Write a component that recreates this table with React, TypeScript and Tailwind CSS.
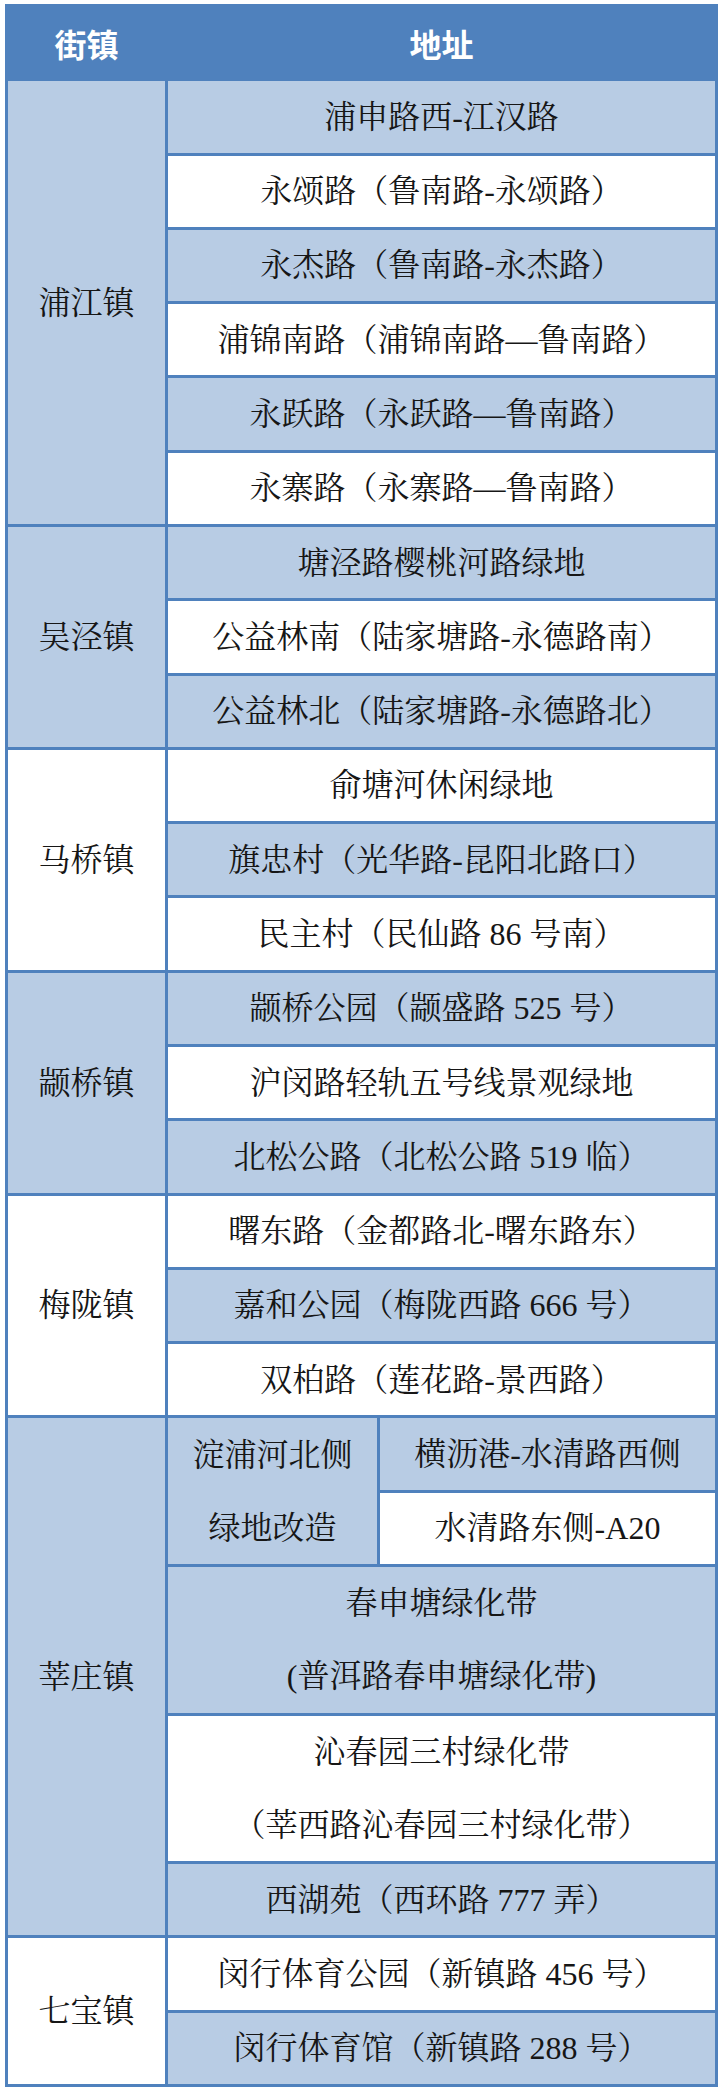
import React from "react";

type Cell = {
	text: string[];
	pos: string;
	light?: boolean;
};

const body = "font-['Liberation_Serif','Noto_Serif_CJK_SC','Noto_Sans_CJK_SC',serif]";

// col1 = 街镇, col2 = 地址 (spans 2 sub columns unless split)
const cells: Cell[] = [
	{ text: ["浦江镇"], pos: "col-start-1 row-span-6", light: true },
	{ text: ["浦申路西-江汉路"], pos: "col-start-2 col-span-2", light: true },
	{ text: ["永颂路（鲁南路-永颂路）"], pos: "col-start-2 col-span-2" },
	{ text: ["永杰路（鲁南路-永杰路）"], pos: "col-start-2 col-span-2", light: true },
	{ text: ["浦锦南路（浦锦南路—鲁南路）"], pos: "col-start-2 col-span-2" },
	{ text: ["永跃路（永跃路—鲁南路）"], pos: "col-start-2 col-span-2", light: true },
	{ text: ["永寨路（永寨路—鲁南路）"], pos: "col-start-2 col-span-2" },

	{ text: ["吴泾镇"], pos: "col-start-1 row-span-3", light: true },
	{ text: ["塘泾路樱桃河路绿地"], pos: "col-start-2 col-span-2", light: true },
	{ text: ["公益林南（陆家塘路-永德路南）"], pos: "col-start-2 col-span-2" },
	{ text: ["公益林北（陆家塘路-永德路北）"], pos: "col-start-2 col-span-2", light: true },

	{ text: ["马桥镇"], pos: "col-start-1 row-span-3" },
	{ text: ["俞塘河休闲绿地"], pos: "col-start-2 col-span-2" },
	{ text: ["旗忠村（光华路-昆阳北路口）"], pos: "col-start-2 col-span-2", light: true },
	{ text: ["民主村（民仙路 86 号南）"], pos: "col-start-2 col-span-2" },

	{ text: ["颛桥镇"], pos: "col-start-1 row-span-3", light: true },
	{ text: ["颛桥公园（颛盛路 525 号）"], pos: "col-start-2 col-span-2", light: true },
	{ text: ["沪闵路轻轨五号线景观绿地"], pos: "col-start-2 col-span-2" },
	{ text: ["北松公路（北松公路 519 临）"], pos: "col-start-2 col-span-2", light: true },

	{ text: ["梅陇镇"], pos: "col-start-1 row-span-3" },
	{ text: ["曙东路（金都路北-曙东路东）"], pos: "col-start-2 col-span-2" },
	{ text: ["嘉和公园（梅陇西路 666 号）"], pos: "col-start-2 col-span-2", light: true },
	{ text: ["双柏路（莲花路-景西路）"], pos: "col-start-2 col-span-2" },

	{ text: ["莘庄镇"], pos: "col-start-1 row-span-7", light: true },
	{ text: ["淀浦河北侧", "绿地改造"], pos: "col-start-2 row-span-2", light: true },
	{ text: ["横沥港-水清路西侧"], pos: "col-start-3", light: true },
	{ text: ["水清路东侧-A20"], pos: "col-start-3" },
	{ text: ["春申塘绿化带", "(普洱路春申塘绿化带)"], pos: "col-start-2 col-span-2 row-span-2", light: true },
	{ text: ["沁春园三村绿化带", "（莘西路沁春园三村绿化带）"], pos: "col-start-2 col-span-2 row-span-2" },
	{ text: ["西湖苑（西环路 777 弄）"], pos: "col-start-2 col-span-2", light: true },

	{ text: ["七宝镇"], pos: "col-start-1 row-span-2" },
	{ text: ["闵行体育公园（新镇路 456 号）"], pos: "col-start-2 col-span-2" },
	{ text: ["闵行体育馆（新镇路 288 号）"], pos: "col-start-2 col-span-2", light: true },
];

export default function App() {
	return (
		<div className="min-h-screen bg-white pt-[4px] pl-[5px]">
			<div className="grid h-[2083px] w-[713px] grid-cols-[157px_209px_335px] grid-rows-28 gap-[3px] bg-[#4f81bd] p-[3px]">
				{/* header */}
				<div className="col-start-1 flex items-center justify-center bg-[#4f81bd] font-['Noto_Sans_CJK_SC',sans-serif] text-[32px] font-bold text-white">
					街镇
				</div>
				<div className="col-start-2 col-span-2 flex items-center justify-center bg-[#4f81bd] font-['Noto_Sans_CJK_SC',sans-serif] text-[32px] font-bold text-white">
					地址
				</div>

				{cells.map((c, i) => (
					<div
						key={i}
						className={`${c.pos} flex flex-col ${c.light ? "bg-[#b8cce4]" : "bg-white"} ${body} text-[32px] text-[#161616]`}
					>
						{c.text.map((t, j) => (
							<div key={j} className="flex flex-1 items-center justify-center whitespace-nowrap">
								{t}
							</div>
						))}
					</div>
				))}
			</div>
		</div>
	);
}
